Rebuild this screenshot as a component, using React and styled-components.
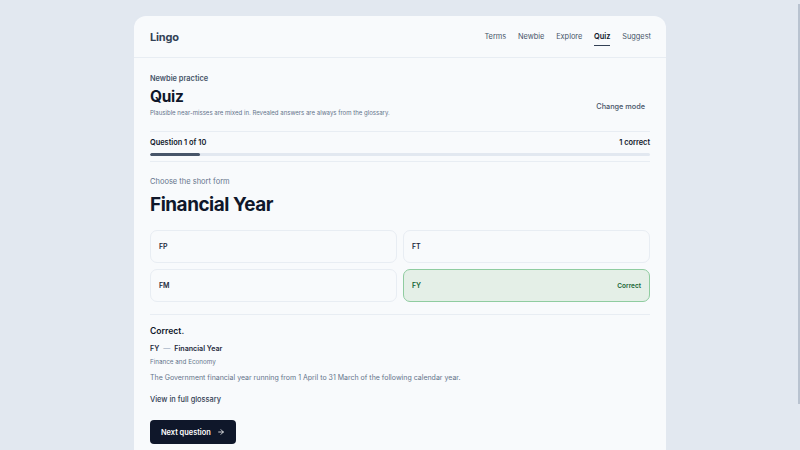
import React from 'react'
import styled, { createGlobalStyle } from 'styled-components'

const Global = createGlobalStyle`
  html { scrollbar-width: none; }
  body {
    margin: 0;
    background: #e2e8f0;
    font-family: Inter, "Noto Sans", sans-serif;
    color: #0f172a;
  }
`

// thin overlay scroll thumb seen at the right edge
const ScrollThumb = styled.div`
  position: fixed;
  top: 4px;
  right: 0;
  width: 2px;
  height: 400px;
  background: #b9c3d0;
`

const Page = styled.div`
  padding: 16px 0 40px;
  display: flex;
  justify-content: center;
`

const Card = styled.div`
  width: 532px;
  background: #f8fafc;
  border-radius: 12px;
  box-shadow: 0 0 0 1px rgba(226, 232, 240, 0.6);
`

const Header = styled.header`
  height: 41px;
  display: flex;
  align-items: center;
  justify-content: space-between;
  padding: 0 15px 0 16px;
  border-bottom: 1px solid #e8edf3;
`

const Logo = styled.div`
  font-size: 11px;
  font-weight: 700;
  color: #334155;
  letter-spacing: -0.2px;
`

const Nav = styled.nav`
  display: flex;
  gap: 11.75px;
  height: 100%;
`

const NavLink = styled.a`
  font-size: 7.4px;
  color: ${p => (p.active ? '#0f172a' : '#475569')};
  font-weight: ${p => (p.active ? 600 : 400)};
  display: flex;
  align-items: center;
  position: relative;
  &::after {
    content: '';
    display: ${p => (p.active ? 'block' : 'none')};
    position: absolute;
    left: 0;
    right: 0;
    bottom: 11px;
    height: 1.5px;
    background: #334155;
  }
`

const Body = styled.main`
  padding: 16px 16px 28px;
`

const TopRow = styled.div`
  display: flex;
  justify-content: space-between;
  align-items: flex-end;
  padding-bottom: 14px;
  border-bottom: 1px solid #e8edf3;
`

const Eyebrow = styled.div`
  font-size: 7.4px;
  line-height: 10px;
  font-weight: 600;
  color: #475569;
`

const Title = styled.h1`
  margin: 3px 0 2px;
  font-size: 15.5px;
  font-weight: 700;
  line-height: 20px;
  letter-spacing: -0.3px;
`

const Sub = styled.p`
  margin: 0;
  font-size: 6.05px;
  line-height: 8px;
  color: #64748b;
`

const GhostButton = styled.button`
  background: none;
  border: none;
  font-family: inherit;
  font-size: 7.3px;
  line-height: 20px;
  font-weight: 500;
  color: #475569;
  padding: 0 5px;
`

const Progress = styled.div`
  padding: 6px 0 5px;
  border-bottom: 1px solid #e8edf3;
`

const ProgressHead = styled.div`
  display: flex;
  justify-content: space-between;
  font-size: 7.4px;
  line-height: 10px;
  font-weight: 600;
  color: #0f172a;
`

const Track = styled.div`
  margin-top: 5px;
  height: 3px;
  border-radius: 2px;
  background: #e2e8f0;
  overflow: hidden;
`

const Fill = styled.div`
  height: 100%;
  background: #475569;
  border-radius: 2px;
`

const Prompt = styled.div`
  margin-top: 15px;
  font-size: 7.5px;
  line-height: 10px;
  color: #64748b;
`

const Term = styled.h2`
  margin: 6px 0 0;
  font-size: 18.9px;
  line-height: 24px;
  font-weight: 700;
  letter-spacing: -0.45px;
`

const Options = styled.div`
  margin-top: 13px;
  display: grid;
  grid-template-columns: 1fr 1fr;
  gap: 6px;
  padding-bottom: 12px;
  border-bottom: 1px solid #e8edf3;
`

const Option = styled.div`
  height: 33px;
  box-sizing: border-box;
  border-radius: 7px;
  border: 1px solid ${p => (p.correct ? '#8fcca0' : '#e8edf3')};
  background: ${p => (p.correct ? '#e4efe7' : '#f8fafc')};
  display: flex;
  align-items: center;
  justify-content: space-between;
  padding: 0 8px;
  font-size: 7px;
  font-weight: 600;
  color: ${p => (p.correct ? '#166534' : '#1e293b')};
`

const OptionNote = styled.span`
  font-size: 6.5px;
  font-weight: 600;
`

const Result = styled.section`
  padding-top: 10px;
`

const ResultTitle = styled.div`
  font-size: 8.6px;
  line-height: 12px;
  font-weight: 600;
  color: #0f172a;
`

const Pair = styled.div`
  margin-top: 7px;
  font-size: 7.1px;
  line-height: 10px;
  font-weight: 600;
  color: #1e293b;
  display: flex;
  gap: 4px;
`

const Dash = styled.span`
  color: #94a3b8;
  font-weight: 400;
`

const Category = styled.div`
  margin-top: 4px;
  font-size: 6.3px;
  line-height: 8px;
  color: #64748b;
`

const Desc = styled.p`
  margin: 7px 0 0;
  font-size: 7px;
  line-height: 10px;
  color: #64748b;
`

const Link = styled.a`
  display: block;
  margin-top: 12px;
  font-size: 7.4px;
  line-height: 10px;
  font-weight: 500;
  color: #334155;
`

const Primary = styled.button`
  margin-top: 15px;
  height: 24px;
  padding: 0 11px;
  border: none;
  border-radius: 4px;
  background: #0f172a;
  color: #fff;
  font-family: inherit;
  font-size: 7.4px;
  font-weight: 600;
  display: flex;
  align-items: center;
  gap: 6px;
`

const options = [
  { label: 'FP' },
  { label: 'FT' },
  { label: 'FM' },
  { label: 'FY', correct: true },
]

export default function App() {
  return (
    <>
      <Global />
      <ScrollThumb />
      <Page>
        <Card>
          <Header>
            <Logo>Lingo</Logo>
            <Nav>
              <NavLink>Terms</NavLink>
              <NavLink>Newbie</NavLink>
              <NavLink>Explore</NavLink>
              <NavLink active>Quiz</NavLink>
              <NavLink>Suggest</NavLink>
            </Nav>
          </Header>
          <Body>
            <TopRow>
              <div>
                <Eyebrow>Newbie practice</Eyebrow>
                <Title>Quiz</Title>
                <Sub>Plausible near-misses are mixed in. Revealed answers are always from the glossary.</Sub>
              </div>
              <GhostButton>Change mode</GhostButton>
            </TopRow>
            <Progress>
              <ProgressHead>
                <span>Question 1 of 10</span>
                <span>1 correct</span>
              </ProgressHead>
              <Track>
                <Fill style={{ width: '10%' }} />
              </Track>
            </Progress>
            <Prompt>Choose the short form</Prompt>
            <Term>Financial Year</Term>
            <Options>
              {options.map(o => (
                <Option key={o.label} correct={o.correct}>
                  <span>{o.label}</span>
                  {o.correct && <OptionNote>Correct</OptionNote>}
                </Option>
              ))}
            </Options>
            <Result>
              <ResultTitle>Correct.</ResultTitle>
              <Pair>
                <span>FY</span>
                <Dash>—</Dash>
                <span>Financial Year</span>
              </Pair>
              <Category>Finance and Economy</Category>
              <Desc>The Government financial year running from 1 April to 31 March of the following calendar year.</Desc>
              <Link>View in full glossary</Link>
              <Primary>
                Next question
                <svg width="8" height="8" viewBox="0 0 24 24" fill="none" stroke="currentColor" strokeWidth="2.4" strokeLinecap="round" strokeLinejoin="round">
                  <path d="M5 12h14" />
                  <path d="m12 5 7 7-7 7" />
                </svg>
              </Primary>
            </Result>
          </Body>
        </Card>
      </Page>
    </>
  )
}
